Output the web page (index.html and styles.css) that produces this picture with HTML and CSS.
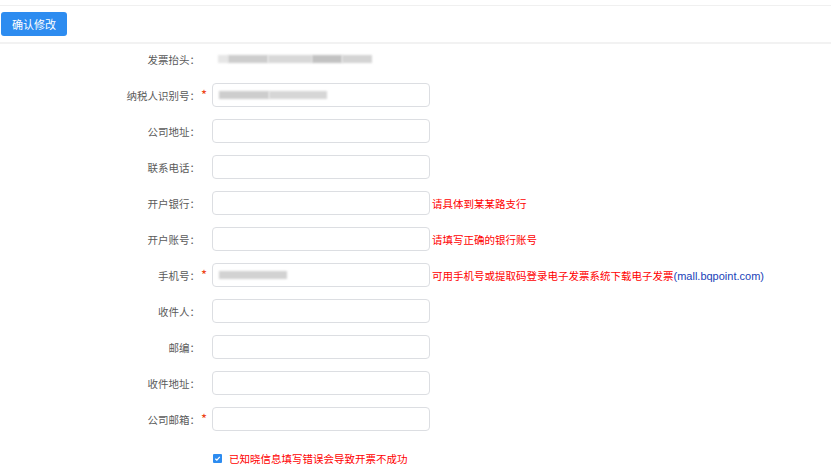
FILE: index.html
```html
<!DOCTYPE html>
<html lang="zh-CN">
<head>
  <meta charset="UTF-8">
  <title>发票信息</title>
  <link rel="stylesheet" href="styles.css">
</head>
<body>
  <div class="toolbar">
    <button class="btn-primary">确认修改</button>
  </div>

  <form class="invoice-form">
    <div class="row">
      <label class="label">发票抬头：</label>
      <span class="star"></span>
      <div class="value">
        <span class="mask m1"></span><span class="mask m2"></span><span class="mask m3"></span><span class="mask m4"></span><span class="mask m5"></span>
      </div>
    </div>

    <div class="row">
      <label class="label">纳税人识别号：</label>
      <span class="star">*</span>
      <div class="input filled">
        <span class="mask m6"></span><span class="mask m7"></span>
      </div>
    </div>

    <div class="row">
      <label class="label">公司地址：</label>
      <span class="star"></span>
      <input class="input" type="text">
    </div>

    <div class="row">
      <label class="label">联系电话：</label>
      <span class="star"></span>
      <input class="input" type="text">
    </div>

    <div class="row">
      <label class="label">开户银行：</label>
      <span class="star"></span>
      <input class="input" type="text">
      <span class="hint">请具体到某某路支行</span>
    </div>

    <div class="row">
      <label class="label">开户账号：</label>
      <span class="star"></span>
      <input class="input" type="text">
      <span class="hint">请填写正确的银行账号</span>
    </div>

    <div class="row">
      <label class="label">手机号：</label>
      <span class="star">*</span>
      <div class="input filled">
        <span class="mask m8"></span>
      </div>
      <span class="hint">可用手机号或提取码登录电子发票系统下载电子发票<span class="site">(mall.bqpoint.com)</span></span>
    </div>

    <div class="row">
      <label class="label">收件人：</label>
      <span class="star"></span>
      <input class="input" type="text">
    </div>

    <div class="row">
      <label class="label">邮编：</label>
      <span class="star"></span>
      <input class="input" type="text">
    </div>

    <div class="row">
      <label class="label">收件地址：</label>
      <span class="star"></span>
      <input class="input" type="text">
    </div>

    <div class="row">
      <label class="label">公司邮箱：</label>
      <span class="star">*</span>
      <input class="input" type="text">
    </div>

    <div class="row agree">
      <span class="label"></span>
      <span class="star"></span>
      <label class="check">
        <span class="box">
          <svg width="7" height="7" viewBox="0 0 8 8"><path d="M1.5 4.2 L3.3 5.8 L6.6 2.2" fill="none" stroke="#fff" stroke-width="1.4"/></svg>
        </span>
        已知晓信息填写错误会导致开票不成功
      </label>
    </div>
  </form>
</body>
</html>
```

FILE: styles.css
```css
body {
  margin: 0;
  background: #fff;
  font-family: "Noto Sans CJK SC", "Noto Sans", sans-serif;
  font-size: 10.5px;
  color: #555;
}

.toolbar {
  margin-top: 5px;
  border-top: 1px solid #f0f0f0;
  border-bottom: 2px solid #f2f2f2;
  padding: 6px 0 6px 1px;
}

.btn-primary {
  display: block;
  width: 66px;
  height: 24px;
  padding: 0;
  border: none;
  border-radius: 3px;
  background: #2d8cf0;
  color: #fff;
  font-family: inherit;
  font-size: 11px;
  line-height: 24px;
}

.invoice-form {
  padding-top: 3px;
}

.row {
  display: flex;
  align-items: center;
  height: 24px;
  margin-bottom: 12px;
}

.label {
  width: 200px;
  text-align: right;
  color: #5a5a5a;
  flex: none;
}

.star {
  width: 12px;
  flex: none;
  padding-left: 1px;
  box-sizing: border-box;
  color: #ed3f14;
  font-size: 13px;
  line-height: 24px;
}

.input {
  width: 218px;
  height: 24px;
  box-sizing: border-box;
  border: 1px solid #dcdee2;
  border-radius: 4px;
  background: #fff;
  padding: 0 6px;
  margin: 0;
  flex: none;
  font: inherit;
}

.filled {
  display: flex;
  align-items: center;
}

.value {
  display: flex;
  align-items: center;
  padding-left: 6px;
}

.mask {
  display: inline-block;
  height: 8px;
  background: #cdcdcd;
  filter: blur(1.2px);
}
.m1 { width: 10px; background: #e6e6e6; }
.m2 { width: 40px; }
.m3 { width: 44px; background: #d8d8d8; }
.m4 { width: 30px; background: #c2c2c2; }
.m5 { width: 30px; background: #d4d4d4; }
.m6 { width: 50px; }
.m7 { width: 58px; background: #d6d6d6; }
.m8 { width: 68px; background: #d2d2d2; }

.hint {
  margin-left: 2px;
  color: #f00;
  font-size: 10.5px;
  white-space: nowrap;
}

.site {
  color: #1a3fb8;
  font-family: "Liberation Sans", Arial, sans-serif;
  font-size: 11px;
}

.agree {
  margin-top: 15px;
}

.check {
  display: flex;
  align-items: center;
  color: #f00;
  font-size: 10.5px;
}

.box {
  display: inline-flex;
  align-items: center;
  justify-content: center;
  width: 9px;
  height: 9px;
  margin: 0 7px 0 1px;
  background: #2d8cf0;
  border-radius: 1px;
}
```
